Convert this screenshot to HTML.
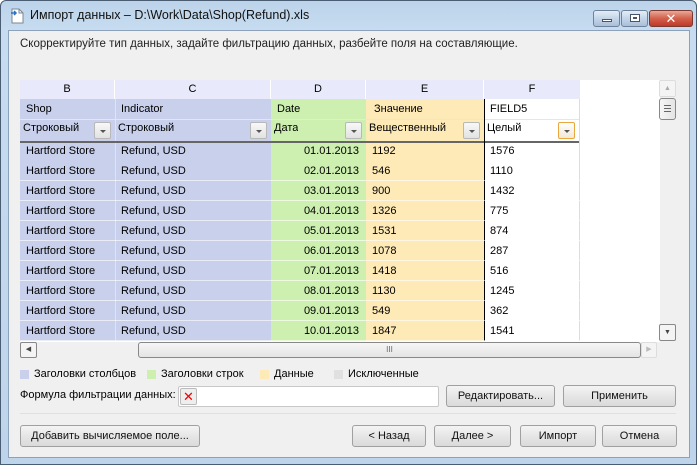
<!DOCTYPE html>
<html><head><meta charset="utf-8"><style>
*{box-sizing:border-box;margin:0;padding:0}
body{width:697px;height:465px;overflow:hidden;background:#fff;font-family:"Liberation Sans","DejaVu Sans",sans-serif;font-size:11px;color:#000;position:relative}
.a{position:absolute}
.frame{left:0;top:0;width:697px;height:465px;background:linear-gradient(#bcd3ea,#c7dcf0 30px,#bed4ea);border:1px solid #4a5d73;border-radius:6px 6px 0 0}
.client{left:8px;top:30px;width:682px;height:428px;background:#f0f0f0;border:1px solid #8da2ba}
.btn{position:absolute;height:22px;border:1px solid #a0a0a0;border-radius:3px;background:linear-gradient(#f4f4f4,#e6e6e6 50%,#dadada);text-align:center;line-height:20px;font-size:11px;color:#111}
.cell{position:absolute;height:20px;line-height:20px;padding-left:6px;overflow:hidden;white-space:nowrap}
.dd{position:absolute;width:17px;height:17px;border:1px solid #b8b8b8;border-radius:2px;background:linear-gradient(#f8f8f8,#e2e2e2)}
.dd:after{content:"";position:absolute;left:5px;top:7px;border-left:3px solid transparent;border-right:3px solid transparent;border-top:3px solid #555}
.sq{position:absolute;width:9px;height:9px}
.r{width:88px;text-align:right}
</style></head><body>
<div class="a frame"></div>
<svg class="a" style="left:10px;top:8px" width="14" height="16"><path d="M2 1h7l4 4v10H2z" fill="#fff" stroke="#7d8794"/><path d="M9 1v4h4" fill="none" stroke="#7d8794"/><path d="M1 5h5M4 3l2 2-2 2" stroke="#2a72c8" stroke-width="1.5" fill="none"/></svg>
<div class="a" style="left:30px;top:8px;font-size:12.5px;color:#111">Импорт данных – D:\Work\Data\Shop(Refund).xls</div>
<div class="a" style="left:593px;top:10px;width:27px;height:17px;border:1px solid #6f829b;border-radius:3px;background:linear-gradient(#e4edf7,#c4d5e8 50%,#a9bfd8)"><div class="a" style="left:8px;top:8px;width:10px;height:3px;background:#fff;border:1px solid #46556a"></div></div>
<div class="a" style="left:621px;top:10px;width:27px;height:17px;border:1px solid #6f829b;border-radius:3px;background:linear-gradient(#e4edf7,#c4d5e8 50%,#a9bfd8)"><div class="a" style="left:8px;top:3px;width:10px;height:8px;border:1px solid #46556a;background:#fff"><div class="a" style="left:2px;top:2px;width:4px;height:2px;border:1px solid #46556a"></div></div></div>
<div class="a" style="left:649px;top:10px;width:44px;height:17px;border:1px solid #7a3a30;border-radius:3px;background:linear-gradient(#e9a89a,#d2604a 50%,#c0392b);color:#fff;text-align:center;font-weight:bold;font-size:13px;line-height:15px">✕</div>
<div class="a client"></div>
<div class="a" style="left:20px;top:38px;font-size:11.5px;color:#222">Скорректируйте тип данных, задайте фильтрацию данных, разбейте поля на составляющие.</div>
<div class="a" style="left:20px;top:80px;width:652px;height:262px;background:#fff"></div>
<div class="a" style="left:20px;top:80px;width:560px;height:19px;background:#e8eafb"></div>
<div class="a" style="left:20px;top:99px;width:251px;height:242px;background:#c8d0ec"></div>
<div class="a" style="left:271px;top:99px;width:95px;height:242px;background:#cdf0b0"></div>
<div class="a" style="left:366px;top:99px;width:118px;height:242px;background:#feeab7"></div>
<div class="cell" style="left:20px;top:80px;width:95px;text-align:center;padding:0;height:19px;line-height:19px;border-right:1px solid #fff">B</div>
<div class="cell" style="left:115px;top:80px;width:156px;text-align:center;padding:0;height:19px;line-height:19px;border-right:1px solid #fff">C</div>
<div class="cell" style="left:271px;top:80px;width:95px;text-align:center;padding:0;height:19px;line-height:19px;border-right:1px solid #fff">D</div>
<div class="cell" style="left:366px;top:80px;width:118px;text-align:center;padding:0;height:19px;line-height:19px;border-right:1px solid #fff">E</div>
<div class="cell" style="left:484px;top:80px;width:96px;text-align:center;padding:0;height:19px;line-height:19px">F</div>
<div class="a" style="left:115px;top:99px;width:1px;height:242px;background:#dfe3f3"></div>
<div class="a" style="left:20px;top:119px;width:560px;height:1px;background:#e6e6e6"></div>
<div class="a" style="left:20px;top:141px;width:560px;height:2px;background:#666"></div>
<div class="a" style="left:484px;top:99px;width:1px;height:242px;background:#000"></div>
<div class="a" style="left:579px;top:99px;width:1px;height:242px;background:#ddd"></div>
<div class="cell" style="left:20px;top:99px">Shop</div>
<div class="cell" style="left:115px;top:99px">Indicator</div>
<div class="cell" style="left:271px;top:99px">Date</div>
<div class="cell" style="left:368px;top:99px">Значение</div>
<div class="cell" style="left:484px;top:99px">FIELD5</div>
<div class="cell" style="left:20px;top:118px;padding-left:3px">Строковый</div>
<div class="cell" style="left:115px;top:118px;padding-left:3px">Строковый</div>
<div class="cell" style="left:271px;top:118px;padding-left:3px">Дата</div>
<div class="cell" style="left:366px;top:118px;padding-left:3px">Вещественный</div>
<div class="cell" style="left:484px;top:118px;padding-left:3px">Целый</div>
<div class="dd" style="left:94px;top:122px"></div>
<div class="dd" style="left:250px;top:122px"></div>
<div class="dd" style="left:345px;top:122px"></div>
<div class="dd" style="left:463px;top:122px"></div>
<div class="dd" style="left:558px;top:122px;border-color:#e8a840;background:linear-gradient(#fff,#f3e8d4)"></div>
<div style="position:absolute;left:0;top:1px">
<div class="cell" style="left:20px;top:140px">Hartford Store</div><div class="cell" style="left:115px;top:140px">Refund, USD</div><div class="cell r" style="left:271px;top:140px">01.01.2013</div><div class="cell" style="left:366px;top:140px">1192</div><div class="cell" style="left:484px;top:140px">1576</div>
<div class="cell" style="left:20px;top:160px">Hartford Store</div><div class="cell" style="left:115px;top:160px">Refund, USD</div><div class="cell r" style="left:271px;top:160px">02.01.2013</div><div class="cell" style="left:366px;top:160px">546</div><div class="cell" style="left:484px;top:160px">1110</div>
<div class="cell" style="left:20px;top:180px">Hartford Store</div><div class="cell" style="left:115px;top:180px">Refund, USD</div><div class="cell r" style="left:271px;top:180px">03.01.2013</div><div class="cell" style="left:366px;top:180px">900</div><div class="cell" style="left:484px;top:180px">1432</div>
<div class="cell" style="left:20px;top:200px">Hartford Store</div><div class="cell" style="left:115px;top:200px">Refund, USD</div><div class="cell r" style="left:271px;top:200px">04.01.2013</div><div class="cell" style="left:366px;top:200px">1326</div><div class="cell" style="left:484px;top:200px">775</div>
<div class="cell" style="left:20px;top:220px">Hartford Store</div><div class="cell" style="left:115px;top:220px">Refund, USD</div><div class="cell r" style="left:271px;top:220px">05.01.2013</div><div class="cell" style="left:366px;top:220px">1531</div><div class="cell" style="left:484px;top:220px">874</div>
<div class="cell" style="left:20px;top:240px">Hartford Store</div><div class="cell" style="left:115px;top:240px">Refund, USD</div><div class="cell r" style="left:271px;top:240px">06.01.2013</div><div class="cell" style="left:366px;top:240px">1078</div><div class="cell" style="left:484px;top:240px">287</div>
<div class="cell" style="left:20px;top:260px">Hartford Store</div><div class="cell" style="left:115px;top:260px">Refund, USD</div><div class="cell r" style="left:271px;top:260px">07.01.2013</div><div class="cell" style="left:366px;top:260px">1418</div><div class="cell" style="left:484px;top:260px">516</div>
<div class="cell" style="left:20px;top:280px">Hartford Store</div><div class="cell" style="left:115px;top:280px">Refund, USD</div><div class="cell r" style="left:271px;top:280px">08.01.2013</div><div class="cell" style="left:366px;top:280px">1130</div><div class="cell" style="left:484px;top:280px">1245</div>
<div class="cell" style="left:20px;top:300px">Hartford Store</div><div class="cell" style="left:115px;top:300px">Refund, USD</div><div class="cell r" style="left:271px;top:300px">09.01.2013</div><div class="cell" style="left:366px;top:300px">549</div><div class="cell" style="left:484px;top:300px">362</div>
<div class="cell" style="left:20px;top:320px">Hartford Store</div><div class="cell" style="left:115px;top:320px">Refund, USD</div><div class="cell r" style="left:271px;top:320px">10.01.2013</div><div class="cell" style="left:366px;top:320px">1847</div><div class="cell" style="left:484px;top:320px">1541</div>
</div>
<div class="a" style="left:20px;top:161px;width:560px;height:180px;background:repeating-linear-gradient(transparent 0 19px,rgba(255,255,255,.6) 19px 20px)"></div>
<div class="a" style="left:660px;top:80px;width:16px;height:262px;background:#f0f0f0"></div>
<div class="a" style="left:659px;top:80px;width:17px;height:17px;border:1px solid #ddd;border-radius:2px;background:#f4f4f4;color:#aaa;font-size:7px;text-align:center;line-height:15px">▲</div>
<div class="a" style="left:659px;top:98px;width:17px;height:22px;border:1px solid #888;border-radius:3px;background:linear-gradient(90deg,#f6f6f6,#e4e4e4)"><div class="a" style="left:4px;top:6px;width:7px;height:7px;border-top:1px solid #666;border-bottom:1px solid #666"></div><div class="a" style="left:4px;top:9px;width:7px;height:1px;background:#666"></div></div>
<div class="a" style="left:659px;top:324px;width:17px;height:17px;border:1px solid #888;border-radius:2px;background:#f4f4f4;color:#444;font-size:7px;text-align:center;line-height:15px">▼</div>
<div class="a" style="left:20px;top:342px;width:637px;height:16px;background:#f0f0f0"></div>
<div class="a" style="left:20px;top:342px;width:17px;height:16px;border:1px solid #888;border-radius:2px;background:#f4f4f4;color:#444;font-size:7px;text-align:center;line-height:14px">◀</div>
<div class="a" style="left:138px;top:342px;width:503px;height:16px;border:1px solid #888;border-radius:3px;background:linear-gradient(#f6f6f6,#e4e4e4);color:#666;font-size:8px;text-align:center;line-height:14px">III</div>
<div class="a" style="left:641px;top:342px;width:16px;height:16px;border:1px solid #ddd;border-radius:2px;background:#f4f4f4;color:#bbb;font-size:7px;text-align:center;line-height:14px">▶</div>
<div class="sq" style="left:20px;top:370px;background:#c8d0ec"></div><div class="a" style="left:34px;top:368px;font-size:11px">Заголовки столбцов</div>
<div class="sq" style="left:147px;top:370px;background:#cdf0b0"></div><div class="a" style="left:161px;top:368px;font-size:11px">Заголовки строк</div>
<div class="sq" style="left:260px;top:370px;background:#feeab7"></div><div class="a" style="left:274px;top:368px;font-size:11px">Данные</div>
<div class="sq" style="left:334px;top:370px;background:#e0e0e0"></div><div class="a" style="left:348px;top:368px;font-size:11px">Исключенные</div>
<div class="a" style="left:20px;top:389px;font-size:11px">Формула фильтрации данных:</div>
<div class="a" style="left:178px;top:386px;width:261px;height:21px;border:1px solid #c8c8c8;border-radius:2px;background:#fff"></div>
<div class="a" style="left:180px;top:388px;width:17px;height:17px;border:1px solid #bbb;border-radius:2px;background:#eee;color:#e00;text-align:center;line-height:15px;font-size:13px">✕</div>
<div class="btn" style="left:446px;top:385px;width:109px">Редактировать...</div>
<div class="btn" style="left:563px;top:385px;width:113px">Применить</div>
<div class="a" style="left:20px;top:413px;width:656px;height:1px;background:#e0e0e0"></div>
<div class="btn" style="left:20px;top:425px;width:180px">Добавить вычисляемое поле...</div>
<div class="btn" style="left:352px;top:425px;width:74px">&lt; Назад</div>
<div class="btn" style="left:434px;top:425px;width:77px">Далее &gt;</div>
<div class="btn" style="left:520px;top:425px;width:76px">Импорт</div>
<div class="btn" style="left:602px;top:425px;width:75px">Отмена</div>
</body></html>
